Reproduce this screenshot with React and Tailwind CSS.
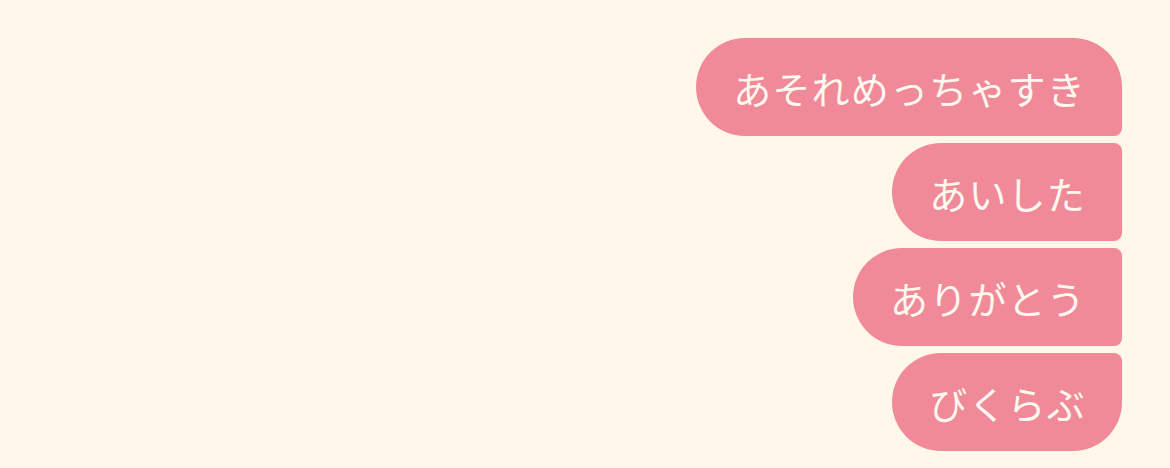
import React from 'react';

const messages = ['あそれめっちゃすき', 'あいした', 'ありがとう', 'びくらぶ'];

const Bubble = ({ text, index, total }) => {
  const first = index === 0;
  const last = index === total - 1;
  let corners = 'rounded-l-[49px] rounded-r-[8px]';
  if (first) corners = 'rounded-l-[49px] rounded-tr-[49px] rounded-br-[8px]';
  if (last) corners = 'rounded-l-[49px] rounded-tr-[8px] rounded-br-[49px]';

  return (
    <div className={`h-[98px] flex items-center pl-[37px] pr-[36px] bg-[#f08a98] text-[#fff8f0] text-[38px] tracking-[1.2px] ${corners}`}>
      {text}
    </div>
  );
};

export default function App() {
  return (
    <div
      className="w-[1170px] h-[468px] bg-[#fff8ea] pt-[38px] pr-[48px] flex flex-col items-end gap-[7px]"
      style={{ fontFamily: '"Noto Sans CJK JP", "Noto Sans", sans-serif' }}
    >
      {messages.map((m, i) => (
        <Bubble key={m} text={m} index={i} total={messages.length} />
      ))}
    </div>
  );
}
